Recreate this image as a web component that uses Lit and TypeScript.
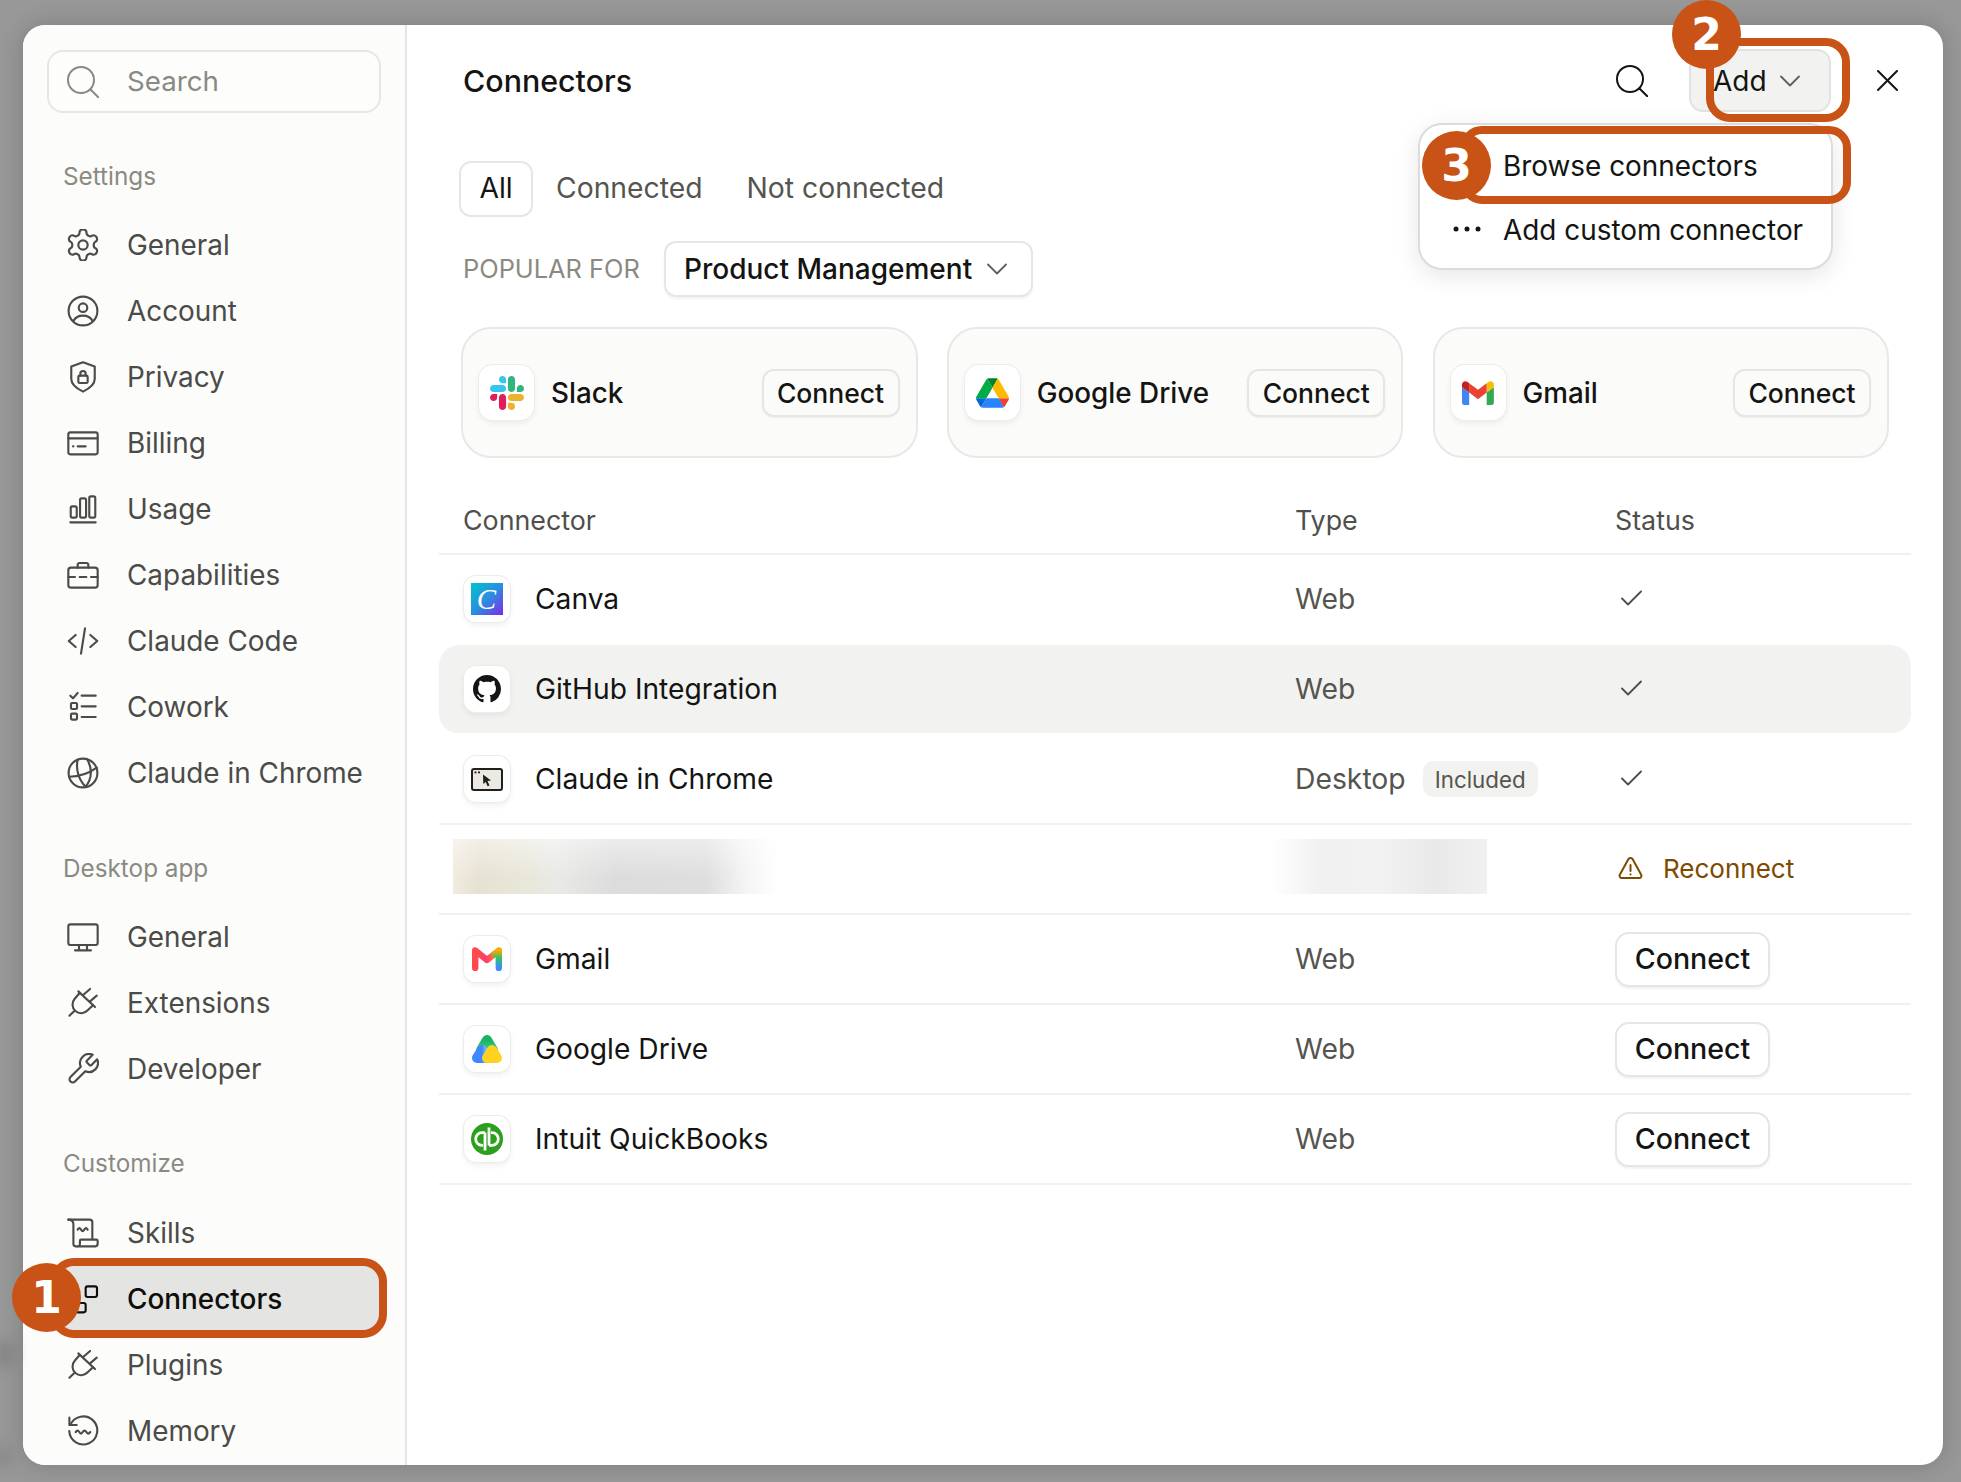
import { LitElement, html, css, svg } from "lit";
import { customElement } from "lit/decorators.js";

const ico = (c: unknown, size = 32, vb = "0 0 24 24", sw = 1.6) => html`<svg class="ico" width=${size} height=${size} viewBox=${vb} fill="none" stroke="currentColor" stroke-width=${sw} stroke-linecap="round" stroke-linejoin="round">${c}</svg>`;

const plug = svg`<path d="M1.800 21.500 5.300 18.200"/><path d="M8.500 3.300 21 15"/><path d="M12.300 5.800 17.300 1.500"/><path d="M17.300 10.800 22.300 6.500"/><path d="M9.500 4.500 5.800 8.800a6.500 6.500 0 0 0 9.700 8.700l4-3.800"/>`;
const I: Record<string, unknown> = {
  gear: svg`<g transform="translate(12 12) scale(1.170) translate(-12 -12)" stroke-width="1.400"><path d="M12.220 2h-.44a2 2 0 0 0-2 2v.18a2 2 0 0 1-1 1.730l-.43.25a2 2 0 0 1-2 0l-.15-.08a2 2 0 0 0-2.730.73l-.22.38a2 2 0 0 0 .73 2.730l.15.100a2 2 0 0 1 1 1.720v.51a2 2 0 0 1-1 1.740l-.15.09a2 2 0 0 0-.73 2.730l.22.38a2 2 0 0 0 2.730.73l.15-.08a2 2 0 0 1 2 0l.43.25a2 2 0 0 1 1 1.730V20a2 2 0 0 0 2 2h.44a2 2 0 0 0 2-2v-.18a2 2 0 0 1 1-1.730l.43-.25a2 2 0 0 1 2 0l.15.08a2 2 0 0 0 2.730-.73l.22-.39a2 2 0 0 0-.73-2.730l-.15-.08a2 2 0 0 1-1-1.740v-.5a2 2 0 0 1 1-1.740l.15-.09a2 2 0 0 0 .73-2.730l-.22-.38a2 2 0 0 0-2.730-.73l-.15.08a2 2 0 0 1-2 0l-.43-.25a2 2 0 0 1-1-1.730V4a2 2 0 0 0-2-2z"/><circle cx="12" cy="12" r="3"/></g>`,
  account: svg`<circle cx="12" cy="12" r="10.800"/><circle cx="12" cy="9.500" r="3.200"/><path d="M4.800 19.500c1.500-2.800 4-4 7.200-4s5.700 1.200 7.200 4"/>`,
  privacy: svg`<path d="M12 1 20.800 4.200v9.300c0 3.800-3.800 7-8.800 9.500-5-2.500-8.800-5.700-8.800-9.500V4.200z"/><rect x="8.500" y="11" width="7" height="5.500" rx="1"/><path d="M10 11V9.500a2 2 0 0 1 4 0V11"/>`,
  billing: svg`<rect x="1" y="4" width="22" height="16.500" rx="1.500"/><path d="M1 8.500h22"/><path d="M4.500 14.500h.3M8 14.500h6"/>`,
  usage: svg`<rect x="2.800" y="10" width="4.500" height="8.500" rx="1.200"/><rect x="9.800" y="4" width="4.500" height="14.500" rx="1.200"/><rect x="16.700" y="2.500" width="4.500" height="16" rx="1.200"/><path d="M2.500 22h19"/>`,
  case: svg`<rect x="1" y="6.500" width="22" height="15" rx="2"/><path d="M8 6.500V4.500A1.500 1.500 0 0 1 9.500 3h5A1.500 1.500 0 0 1 16 4.500v2"/><path d="M1 13.500h5M9.500 13.500h5M18 13.500h5"/>`,
  code: svg`<path d="M6.500 7.500 1.300 12l5.200 4.500"/><path d="M17.500 7.500 22.700 12l-5.200 4.500"/><path d="M13.500 2.500 10.500 21.500"/>`,
  cowork: svg`<path d="M2.500 3.500 4.500 5.500 8 1.500"/><rect x="3" y="9" width="4.500" height="4.500" rx=".8"/><rect x="3" y="17" width="4.500" height="4.500" rx=".8"/><path d="M11 3.500h10.500M11 11.500h10.500M11 19.500h10.500"/>`,
  globe: svg`<circle cx="12" cy="12" r="10.800"/><path d="M8 2C6.500 9 8.500 17 14 22.300"/><path d="M15 1.700C19 8 19 16 14 22.300"/><path d="M1.700 14.800C8 14.800 16 12.500 22.300 8"/>`,
  monitor: svg`<rect x="1" y="2.500" width="22" height="15.500" rx="1.500"/><path d="M9 18v4M15 18v4M6 22h12"/>`,
  plug,
  wrench: svg`<g transform="translate(12 12) scale(1.120) translate(-12 -12)" stroke-width="1.450"><path d="M14.700 6.300a1 1 0 0 0 0 1.400l1.600 1.600a1 1 0 0 0 1.400 0l3.770-3.770a6 6 0 0 1-7.940 7.940l-6.910 6.910a2.120 2.120 0 0 1-3-3l6.910-6.910a6 6 0 0 1 7.940-7.940l-3.760 3.760z"/></g>`,
  skills: svg`<path d="M1 2H17a2 2 0 0 1 2 2V16.500"/><path d="M1 2c2.500 0 3.800 1.200 3.800 3.500V20a2 2 0 0 0 2 2h14.500a2 2 0 0 0 1.700-2v-2a1 1 0 0 0-1-1H10.500a.8.8 0 0 0-.8.8V20a2 2 0 0 1-2.900 2"/><path d="M8 9.500c1-1.500 1.500-1.500 2.500 0s1.500 1.500 2.500 0 1.500-1.500 2.500 0"/>`,
  connectors: svg`<rect x="14" y="2.500" width="8.500" height="8" rx="1.500"/><rect x="6.500" y="15" width="7.500" height="7" rx="1.500"/>`,
  memory: svg`<path d="M1.800 2V7.500H7.300"/><path d="M2.500 7.500A10.500 10.500 0 1 1 1.700 12"/><path d="M6.500 12.800c1-1.500 1.800-1.500 2.700 0s1.700 1.500 2.600 0 1.800-1.500 2.700 0 1.700 1.500 3 0"/>`,
};

const search = (cls = "") => html`<svg class=${cls} width="32" height="32" viewBox="0 0 32 32" fill="none" stroke="currentColor" stroke-width="2" stroke-linecap="round"><circle cx="14" cy="14" r="13"/><path d="M23.500 23.500 32 32"/></svg>`;
const chevron = html`<svg class="chev" width="20" height="12" viewBox="0 0 20 12" fill="none" stroke="currentColor" stroke-width="1.800" stroke-linecap="round" stroke-linejoin="round"><path d="M1 1.500 10 10.500 19 1.500"/></svg>`;
const check = html`<svg class="check" width="21" height="16" viewBox="0 0 21 16" fill="none" stroke="#4d4d4a" stroke-width="1.800" stroke-linecap="round" stroke-linejoin="round"><path d="M1 8.500 7 14.500 20 1.500"/></svg>`;

const slack = html`<svg width="34" height="34" viewBox="0 0 122.8 122.8"><path d="M25.800 77.600c0 7.100-5.800 12.900-12.900 12.900S0 84.700 0 77.600s5.800-12.900 12.900-12.900h12.900v12.900zm6.500 0c0-7.100 5.800-12.900 12.900-12.900s12.900 5.800 12.900 12.900v32.300c0 7.100-5.800 12.900-12.900 12.900s-12.900-5.800-12.900-12.900V77.600z" fill="#E01E5A"/><path d="M45.200 25.800c-7.100 0-12.900-5.800-12.900-12.900S38.100 0 45.200 0s12.900 5.800 12.900 12.900v12.900H45.200zm0 6.500c7.100 0 12.900 5.800 12.900 12.900s-5.800 12.900-12.900 12.900H12.900C5.800 58.100 0 52.300 0 45.200s5.800-12.900 12.900-12.900h32.300z" fill="#36C5F0"/><path d="M97 45.200c0-7.100 5.800-12.900 12.900-12.900s12.900 5.800 12.900 12.900-5.800 12.900-12.900 12.900H97V45.200zm-6.500 0c0 7.100-5.800 12.900-12.900 12.900s-12.900-5.800-12.900-12.900V12.900C64.700 5.800 70.500 0 77.600 0s12.900 5.800 12.900 12.900v32.300z" fill="#2EB67D"/><path d="M77.600 97c7.100 0 12.900 5.800 12.900 12.900s-5.800 12.900-12.900 12.900-12.900-5.800-12.900-12.900V97h12.900zm0-6.500c-7.100 0-12.900-5.800-12.900-12.900s5.800-12.900 12.900-12.900h32.300c7.100 0 12.900 5.800 12.900 12.900s-5.800 12.900-12.900 12.900H77.600z" fill="#ECB22E"/></svg>`;
const drive = html`<svg width="33" height="30" viewBox="0 0 87.300 78"><path d="m6.600 66.850 3.850 6.650c.8 1.400 1.950 2.500 3.300 3.300l13.750-23.800h-27.500c0 1.550.4 3.100 1.200 4.500z" fill="#0066da"/><path d="m43.650 25-13.750-23.800c-1.350.8-2.500 1.900-3.300 3.300l-25.400 44a9.060 9.060 0 0 0-1.200 4.500h27.500z" fill="#00ac47"/><path d="m73.550 76.800c1.350-.8 2.500-1.900 3.300-3.300l1.600-2.750 7.650-13.250c.8-1.400 1.200-2.950 1.200-4.500h-27.502l5.852 11.500z" fill="#ea4335"/><path d="m43.650 25 13.750-23.800c-1.350-.8-2.900-1.200-4.500-1.200h-18.500c-1.600 0-3.150.45-4.500 1.200z" fill="#00832d"/><path d="m59.800 53h-32.300l-13.750 23.800c1.350.8 2.900 1.200 4.500 1.200h50.800c1.600 0 3.150-.45 4.500-1.200z" fill="#2684fc"/><path d="m73.400 26.500-12.700-22c-.8-1.400-1.950-2.500-3.300-3.300l-13.750 23.800 16.150 28h27.450c0-1.550-.4-3.100-1.200-4.500z" fill="#ffba00"/></svg>`;
const gmail = html`<svg width="32" height="24" viewBox="0 0 24 18"><path d="M1.600 18h3.800V8.700L0 4.650V16.400c0 .9.7 1.600 1.600 1.600" fill="#4285F4"/><path d="M18.500 18h3.800c.9 0 1.600-.7 1.600-1.600V4.650l-5.400 4.050" fill="#34A853"/><path d="M18.500 1.700v7l5.400-4.050V2.500c0-2-2.300-3.100-3.900-1.900" fill="#FBBC04"/><path d="M5.400 8.700v-7L12 6.650l6.500-4.950v7L12 13.600" fill="#EA4335"/><path d="M0 2.500v2.150l5.400 4.050v-7L3.900.6C2.300-.6 0 .5 0 2.500" fill="#C5221F"/></svg>`;
const gmail2 = html`<svg width="30" height="24" viewBox="0 0 30 24"><defs><linearGradient id="gmr" x1="0" y1="0" x2="0" y2="1"><stop offset="0" stop-color="#ffa800"/><stop offset=".45" stop-color="#2fbf71"/><stop offset="1" stop-color="#3d8bff"/></linearGradient><linearGradient id="gml" x1="0" y1="0" x2="1" y2="0"><stop offset="0" stop-color="#ff4a4a"/><stop offset=".6" stop-color="#ff3d6e"/><stop offset="1" stop-color="#ff7a2a"/></linearGradient></defs><path d="M3.200 21V3.500L15 13l7-5.500" fill="none" stroke="url(#gml)" stroke-width="6.400" stroke-linecap="round" stroke-linejoin="round"/><path d="M26.800 21V3.500L22.500 7" fill="none" stroke="url(#gmr)" stroke-width="6.400" stroke-linecap="round" stroke-linejoin="round"/></svg>`;
const canva = html`<svg width="32" height="32" viewBox="0 0 32 32"><defs><linearGradient id="cv" x1="0" y1="0" x2="1" y2="1"><stop offset="0" stop-color="#00c4cc"/><stop offset=".5" stop-color="#2a8fe0"/><stop offset="1" stop-color="#7d2ae8"/></linearGradient></defs><rect width="32" height="32" fill="url(#cv)"/><text x="15.500" y="25.500" text-anchor="middle" font-family="Liberation Serif" font-style="italic" font-size="29" fill="#fff">C</text></svg>`;
const github = html`<svg width="28" height="28" viewBox="0 0 16 16"><path fill="#141413" d="M8 0C3.580 0 0 3.580 0 8c0 3.540 2.290 6.530 5.470 7.590.4.070.55-.17.55-.38 0-.19-.01-.82-.01-1.490-2.010.37-2.530-.49-2.690-.94-.09-.23-.48-.94-.82-1.130-.28-.15-.68-.52-.01-.53.63-.01 1.080.58 1.230.82.72 1.210 1.870.87 2.330.66.07-.52.28-.87.51-1.070-1.780-.2-3.640-.89-3.640-3.950 0-.87.31-1.590.82-2.150-.08-.2-.36-1.020.08-2.120 0 0 .67-.21 2.200.82.64-.18 1.320-.27 2-.27s1.360.09 2 .27c1.530-1.040 2.200-.82 2.200-.82.44 1.100.16 1.920.08 2.120.51.56.82 1.270.82 2.150 0 3.070-1.870 3.750-3.650 3.950.29.25.54.73.54 1.480 0 1.070-.01 1.930-.01 2.200 0 .21.15.46.55.38A8.013 8.013 0 0 0 16 8c0-4.420-3.580-8-8-8z"/></svg>`;
const chrome = html`<svg width="32" height="23" viewBox="0 0 32 23"><rect x="1" y="1" width="30" height="21" rx="2" fill="#ebe9e1" stroke="#1f1f1e" stroke-width="2"/><rect x="3.500" y="3.500" width="2" height="1.800" fill="#1f1f1e"/><rect x="7" y="3.500" width="2" height="1.800" fill="#1f1f1e"/><path d="M12 6.500 20 12.500 16.500 13 18.500 17.500 16.500 18.200 14.800 14 12.300 16z" fill="#1f1f1e"/></svg>`;
const drive2 = html`<svg width="30" height="28" viewBox="0 0 30 28"><defs><linearGradient id="dg" x1="0" y1="0" x2="0" y2="1"><stop offset="0" stop-color="#16b364"/><stop offset="1" stop-color="#3ecb8a"/></linearGradient><linearGradient id="db" x1="0" y1="0" x2="1" y2="0"><stop offset=".5" stop-color="#3d88ff"/><stop offset="1" stop-color="#9db8ff"/></linearGradient></defs><g stroke-width="10" stroke-linejoin="round"><path d="M15 5 21 15H9z" fill="url(#dg)" stroke="url(#dg)"/><path d="M5 23 10 15 15 23z" fill="url(#db)" stroke="url(#db)"/><path d="M25 23 20 15 15 23z" fill="#ffd21f" stroke="#ffd21f"/></g></svg>`;
const qb = html`<svg width="32" height="32" viewBox="0 0 32 32"><circle cx="16" cy="16" r="16" fill="#2ca01c"/><g fill="none" stroke="#fff" stroke-width="2.800"><path d="M14 9.500V27.500"/><path d="M14 9.700H11a6.300 6.300 0 0 0 0 12.600h1"/><path d="M18 22.500V4.500"/><path d="M18 22.300H21a6.300 6.300 0 0 0 0-12.600h-1"/></g></svg>`;
const warn = html`<svg width="25" height="23" viewBox="0 0 25 23" fill="none" stroke="#7d4a00" stroke-width="2" stroke-linecap="round" stroke-linejoin="round"><path d="M10.300 2.300a2.500 2.500 0 0 1 4.400 0l8.500 15.500a2.200 2.200 0 0 1-2 3.200H3.800a2.200 2.200 0 0 1-2-3.200z"/><path d="M12.500 8v6M12.500 17.200v.2"/></svg>`;

type Nav = { h: string; items: [string, string][] };
const nav: Nav[] = [
  { h: "Settings", items: [["gear", "General"], ["account", "Account"], ["privacy", "Privacy"], ["billing", "Billing"], ["usage", "Usage"], ["case", "Capabilities"], ["code", "Claude Code"], ["cowork", "Cowork"], ["globe", "Claude in Chrome"]] },
  { h: "Desktop app", items: [["monitor", "General"], ["plug", "Extensions"], ["wrench", "Developer"]] },
  { h: "Customize", items: [["skills", "Skills"], ["connectors", "Connectors"], ["plug", "Plugins"], ["memory", "Memory"]] },
];
const cards = [["Slack", slack], ["Google Drive", drive], ["Gmail", gmail]] as const;

@customElement("app-root")
export class AppRoot extends LitElement {
  static styles = css`
    :host { display: block; width: 1961px; height: 1482px; position: relative; overflow: hidden; background: #989898; font-family: "Inter", "Liberation Sans", sans-serif; color: #141413; }
    * { box-sizing: border-box; }
    .smudge { position: absolute; background: #7a7a7a; filter: blur(7px); border-radius: 50%; opacity: .6; }
    .page { padding: 25px 18px 17px 23px; height: 1482px; }
    .modal { display: flex; height: 1440px; width: 1920px; background: #fff; border-radius: 22px; overflow: hidden; box-shadow: 0 0 24px rgba(0,0,0,.18); }
    aside { width: 384px; flex: none; background: #fcfcfb; border-right: 2px solid #e6e6e4; padding: 25px 24px 0 24px; overflow: hidden; }
    .sbox { height: 63px; border: 2px solid #e6e6e4; border-radius: 16px; display: flex; align-items: center; padding: 0 0 2px 18px; gap: 28px; color: #8a8a82; font-size: 27.700px; background: #fdfdfc; }
    .sbox svg { margin-top: 2px; }
    .sec { margin: 0 0 0 16px; height: 36px; line-height: 36px; font-size: 24.300px; color: #8a8a82; }
    .sec.s0 { margin-top: 45px; margin-bottom: 18px; }
    .sec.s1 { margin-top: 44px; margin-bottom: 18px; }
    .sec.s2 { margin-top: 43px; margin-bottom: 19px; }
    .item { height: 66px; display: flex; align-items: center; gap: 28px; padding-left: 20px; font-size: 27.900px; color: #4b4b48; border-radius: 14px; }
    .item.on { background: #e4e4e2; color: #0e0e0d; font-weight: 500; }
    .ico { flex: none; }
    main { flex: 1; min-width: 0; padding: 24px 32px 0 32px; }
    .head { height: 63px; display: flex; align-items: center; padding-left: 24px; }
    .title { flex: 1; font-size: 30.400px; font-weight: 500; }
    .h-search { color: #141413; margin-right: 41px; }
    .add { width: 142px; height: 63px; border: 2px solid #e2e2e0; border-radius: 14px; background: #f2f2f0; display: flex; align-items: center; padding-left: 22px; gap: 13px; font-size: 28px; }
    .chev { color: #5e5e5a; flex: none; }
    .close { margin-left: 46px; margin-right: 13px; width: 21px; height: 21px; }
    .tabs { display: flex; align-items: center; margin: 49px 0 0 20px; height: 56px; }
    .tab { font-size: 28.300px; color: #55554f; margin-right: 44px; padding-bottom: 2px; }
    .tab.on { width: 74px; height: 56px; border: 2px solid #e6e6e4; border-radius: 12px; color: #141413; display: flex; align-items: center; justify-content: center; margin-right: 23px; }
    .pop { display: flex; align-items: center; height: 56px; margin: 24px 0 0 24px; }
    .pop-l { font-size: 25.400px; color: #8a8a82; width: 201px; flex: none; white-space: nowrap; padding-bottom: 2px; }
    .dd { width: 369px; height: 56px; border: 2px solid #e6e6e4; border-radius: 12px; box-shadow: 0 2px 2px rgba(0,0,0,.05); display: flex; align-items: center; padding-left: 18px; gap: 15px; font-size: 28px; font-weight: 500; white-space: nowrap; }
    .cards { display: flex; gap: 29.250px; margin: 30px 0 0 22px; }
    .card { width: 456.500px; height: 131px; border: 2px solid #e8e8e6; border-radius: 30px; background: #fbfbf9; display: flex; align-items: center; padding: 0 16px 0 16px; }
    .tile { width: 55px; height: 55px; border-radius: 14px; background: #fff; box-shadow: 0 0 0 1px #ececea, 0 3px 6px rgba(0,0,0,.07); display: flex; align-items: center; justify-content: center; flex: none; }
    .card .name { flex: 1; margin-left: 17px; font-size: 27.800px; font-weight: 500; }
    .btn-s { width: 138px; height: 48px; border: 2px solid #e6e6e4; border-radius: 12px; background: #fbfbf9; box-shadow: 0 1px 2px rgba(0,0,0,.05); display: flex; align-items: center; justify-content: center; font-size: 26.500px; font-weight: 500; }
    .grid { display: grid; grid-template-columns: 856px 320px 295px; align-items: center; }
    .thead { height: 97px; border-bottom: 2px solid #f0f0ee; padding-top: 29px; font-size: 26.800px; color: #4f4f4b; }
    .thead div:first-child { padding-left: 24px; }
    .row { height: 90px; border-bottom: 2px solid transparent; background-clip: padding-box; border-radius: 20px; }
    .row.line { border-bottom-color: #f0f0ee; border-radius: 0; }
    .row.hov { background-color: #f2f2f1; }
    .cell1 { display: flex; align-items: center; padding-left: 25px; gap: 25px; font-size: 28.200px; }
    .tile.t2 { width: 46px; height: 46px; border-radius: 12px; }
    .type { display: flex; align-items: center; font-size: 28.300px; color: #55554f; }
    .inc { margin-left: 17px; width: 115px; height: 36px; border-radius: 10px; background: #f2f2f0; font-size: 22.300px; display: flex; align-items: center; justify-content: center; color: #55554f; }
    .check { margin: -2px 0 0 6px; display: block; }
    .rec { display: flex; align-items: center; gap: 20px; padding: 0 0 2px 3px; font-size: 26px; color: #7d4a00; }
    .btn-l { width: 155px; height: 55px; border: 2px solid #e6e6e4; border-radius: 14px; background: #fff; box-shadow: 0 2px 2px rgba(0,0,0,.05); display: flex; align-items: center; justify-content: center; font-size: 28.600px; font-weight: 500; padding-bottom: 1px; }
    .blur { height: 55px; margin-bottom: 5px; }
    .b1 { margin-left: 14px; width: 325px; background: linear-gradient(180deg, rgba(255,255,255,.45), rgba(255,255,255,0) 70%), linear-gradient(90deg, #f1ebe0 0%, #e6e2d2 8%, #e9e7d9 22%, #e9e9e7 32%, #dcdcdc 50%, #dedede 78%, #f4f4f4 90%, #fff 100%); }
    .b2 { margin-left: -25px; width: 217px; background: linear-gradient(90deg, #fff 0%, #f0f0f0 25%, #f2f2f2 50%, #e9e9e9 78%, #f1f1f1 100%); }
    .menu { position: absolute; left: 1418px; top: 123px; width: 415px; height: 147px; background: #fff; border: 2px solid #dcdcda; border-radius: 24px; box-shadow: 0 6px 24px rgba(0,0,0,.1); }
    .mi { position: absolute; left: 83px; font-size: 27.900px; white-space: nowrap; }
    .mi.a { top: 24px; } .mi.b { top: 88px; }
    .dots { position: absolute; left: 33px; top: 101px; }
    .hl { position: absolute; border: 8px solid #c95316; }
    .hl1 { left: 50px; top: 1258px; width: 337px; height: 80px; border-radius: 24px; }
    .hl2 { left: 1706px; top: 38px; width: 144px; height: 84px; border-radius: 24px; }
    .hl3 { left: 1460px; top: 126px; width: 391px; height: 78px; border-radius: 22px; }
    .num { position: absolute; width: 69px; height: 69px; border-radius: 50%; background: #c95316; color: #fff; font-family: "DejaVu Sans", sans-serif; font-weight: 700; font-size: 44px; display: flex; align-items: center; justify-content: center; line-height: 1; }
    .n1 { left: 12px; top: 1263px; }
    .n2 { left: 1672px; top: 0; }
    .n3 { left: 1422px; top: 131px; }
  `;

  private sideNav() {
    return nav.map((g, i) => html`
      <div class="sec s${i}">${g.h}</div>
      ${g.items.map(([k, t]) => html`<div class="item ${t === "Connectors" ? "on" : ""}">${ico(I[k])}<span>${t}</span></div>`)}
    `);
  }

  private row(logo: unknown, name: string, type: unknown, status: unknown, cls = "") {
    return html`<div class="grid row ${cls}"><div class="cell1"><div class="tile t2">${logo}</div><span>${name}</span></div><div class="type">${type}</div><div>${status}</div></div>`;
  }

  render() {
    const conn = html`<div class="btn-l">Connect</div>`;
    return html`
      <div class="smudge" style="left:-6px;top:1340px;width:22px;height:28px"></div>
      <div class="smudge" style="left:-4px;top:1445px;width:14px;height:24px"></div>
      <div class="page"><div class="modal">
        <aside>
          <div class="sbox">${search()}<span>Search</span></div>
          ${this.sideNav()}
        </aside>
        <main>
          <div class="head">
            <div class="title">Connectors</div>
            ${search("h-search")}
            <div class="add"><span>Add</span>${chevron}</div>
            <svg class="close" viewBox="0 0 21 21" fill="none" stroke="#141413" stroke-width="2" stroke-linecap="round"><path d="M1 1 20 20M20 1 1 20"/></svg>
          </div>
          <div class="tabs"><div class="tab on">All</div><div class="tab">Connected</div><div class="tab">Not connected</div></div>
          <div class="pop"><div class="pop-l">POPULAR FOR</div><div class="dd"><span>Product Management</span>${chevron}</div></div>
          <div class="cards">${cards.map(([n, l]) => html`<div class="card"><div class="tile">${l}</div><div class="name">${n}</div><div class="btn-s">Connect</div></div>`)}</div>
          <div class="grid thead"><div>Connector</div><div>Type</div><div>Status</div></div>
          ${this.row(canva, "Canva", "Web", check)}
          ${this.row(github, "GitHub Integration", "Web", check, "hov")}
          ${this.row(chrome, "Claude in Chrome", html`Desktop<span class="inc">Included</span>`, check, "line")}
          <div class="grid row line"><div class="blur b1"></div><div class="blur b2"></div><div class="rec">${warn}<span>Reconnect</span></div></div>
          ${this.row(gmail2, "Gmail", "Web", conn, "line")}
          ${this.row(drive2, "Google Drive", "Web", conn, "line")}
          ${this.row(qb, "Intuit QuickBooks", "Web", conn, "line")}
        </main>
      </div></div>
      <div class="menu">
        <div class="mi a">Browse connectors</div>
        <svg class="dots" width="28" height="6" viewBox="0 0 28 6" fill="#141413"><circle cx="3" cy="3" r="2.500"/><circle cx="14" cy="3" r="2.500"/><circle cx="25" cy="3" r="2.500"/></svg>
        <div class="mi b">Add custom connector</div>
      </div>
      <div class="hl hl1"></div><div class="hl hl2"></div><div class="hl hl3"></div>
      <div class="num n1">1</div><div class="num n2">2</div><div class="num n3">3</div>
    `;
  }
}
